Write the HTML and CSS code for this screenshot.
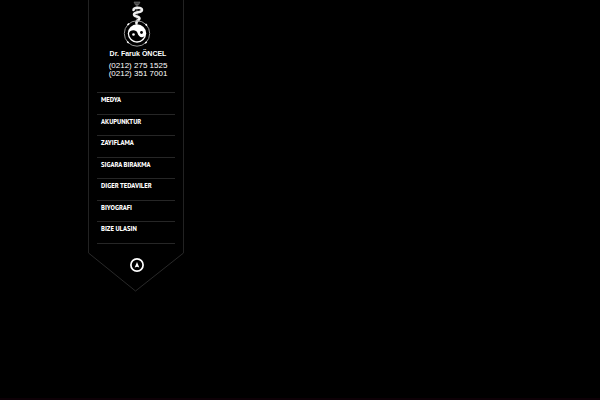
FILE: index.html
```html
<!DOCTYPE html>
<html lang="tr">
<head>
    <meta charset="UTF-8">
    <meta name="viewport" content="width=device-width, initial-scale=1.0">
    <title>Dr. Faruk ÖNCEL</title>
    <link rel="stylesheet" href="styles.css">
</head>
<body>

<aside class="ribbon">
    <div class="panel">
        <header class="brand">
            <svg class="logo" width="28" height="48" viewBox="0 0 28 48" aria-hidden="true">
                <!-- staff and snake -->
                <path d="M11 2h6l-1.500 3h-3z" fill="#444" stroke="#777" stroke-width=".6"/>
                <path d="M14 4v19" stroke="#777" stroke-width="1"/>
                <path d="M10.500 10c0-3 8.500-3 8.500 0c0 3-8 1.500-8 4.500c0 2.500 5.500 1.500 5.500 4c0 2-4 2-3 5" fill="none" stroke="#eee" stroke-width="2.500" stroke-linecap="round"/>
                <!-- yin yang -->
                <circle cx="14" cy="33.500" r="12.700" fill="none" stroke="#999" stroke-width="1"/>
                <circle cx="14" cy="33.500" r="12.700" fill="none" stroke="#fff" stroke-width="1.500" stroke-dasharray="2 17.950" stroke-dashoffset="11"/>
                <circle cx="14" cy="33.500" r="9.200" fill="#fff"/>
                <path d="M6 33.500c.5-4 7.500-4.500 8.500-.5c1 4 4.500 5.500 7 3a8 8 0 0 1-15.500-2.500z" fill="#000"/>
                <circle cx="18.500" cy="32.500" r="1.400" fill="#000"/>
                <circle cx="10.500" cy="34.500" r="1.300" fill="#fff"/>
            </svg>
            <h1 class="name">Dr. Faruk ÖNCEL</h1>
            <p class="phones">(0212) 275 1525<br>(0212) 351 7001</p>
        </header>
        <nav>
            <ul class="menu">
                <li><a href="#">MEDYA</a></li>
                <li><a href="#">AKUPUNKTUR</a></li>
                <li><a href="#">ZAYIFLAMA</a></li>
                <li><a href="#">SIGARA BIRAKMA</a></li>
                <li><a href="#">DIGER TEDAVILER</a></li>
                <li><a href="#">BIYOGRAFI</a></li>
                <li><a href="#">BIZE ULASIN</a></li>
            </ul>
        </nav>
    </div>
    <div class="tip">
        <svg class="tip-edge" width="96" height="39" viewBox="0 0 96 39" aria-hidden="true">
            <path d="M.5 0L47.500 38L95.500 0" fill="none" stroke="#292929"/>
        </svg>
        <button class="toggle" type="button" aria-label="Menu">
            <svg width="14" height="14" viewBox="0 0 14 14" aria-hidden="true">
                <circle cx="7" cy="7" r="6.100" fill="none" stroke="#fff" stroke-width="1.700"/>
                <path d="M7 4l2.300 5.500L7 8.800L4.700 9.500z" fill="#fff"/>
            </svg>
        </button>
    </div>
</aside>

<footer class="bottom-bar"></footer>

</body>
</html>
```
FILE: styles.css
```css
* {
    box-sizing: border-box;
}
body {
    display: flex;
    flex-direction: column;
    align-items: flex-start;
    min-height: 100vh;
    margin: 0;
    background-color: #000;
    color: #fff;
    font-family: "Liberation Sans", Arial, sans-serif;
}
.ribbon {
    width: 96px;
    margin-left: 88px;
}
.panel {
    padding: 0 8px 9px;
    border: solid #222;
    border-width: 0 1px;
}
.brand {
    display: flex;
    flex-direction: column;
    align-items: center;
    padding-left: 4px;
}
.logo {
    display: block;
    margin-right: 2px;
}
.name {
    margin: 0;
    font-size: 7px;
    line-height: 11px;
    white-space: nowrap;
}
.phones {
    margin: 3px 0 14px;
    font-size: 8px;
    line-height: 8px;
    white-space: nowrap;
}
.menu {
    display: grid;
    grid-auto-rows: 1fr;
    height: 152px;
    margin: 0;
    padding: 0;
    list-style: none;
    border-bottom: 1px solid #262626;
}
.menu li {
    padding: 2px 0 0 4px;
    border-top: 1px solid #262626;
}
.menu a {
    display: block;
    color: #fff;
    font-family: "PT Sans Narrow", "Open Sans Condensed", "Roboto Condensed", "Noto Sans ExtraCondensed", "Noto Sans Condensed", "Liberation Sans", sans-serif;
    font-size: 8px;
    font-weight: bold;
    line-height: 9px;
    text-decoration: none;
    white-space: nowrap;
}
.menu a:hover {
    color: #aaa;
}
/* pointed end of the ribbon, with the button over it */
.tip {
    position: relative;
}
.tip-edge {
    display: block;
}
.toggle {
    position: absolute;
    top: 5px;
    left: 42px;
    padding: 0;
    border: none;
    background: none;
    cursor: pointer;
}
.toggle svg {
    display: block;
}
.bottom-bar {
    width: 100%;
    height: 2px;
    margin-top: auto;
    background-color: #0d0006;
}
```
